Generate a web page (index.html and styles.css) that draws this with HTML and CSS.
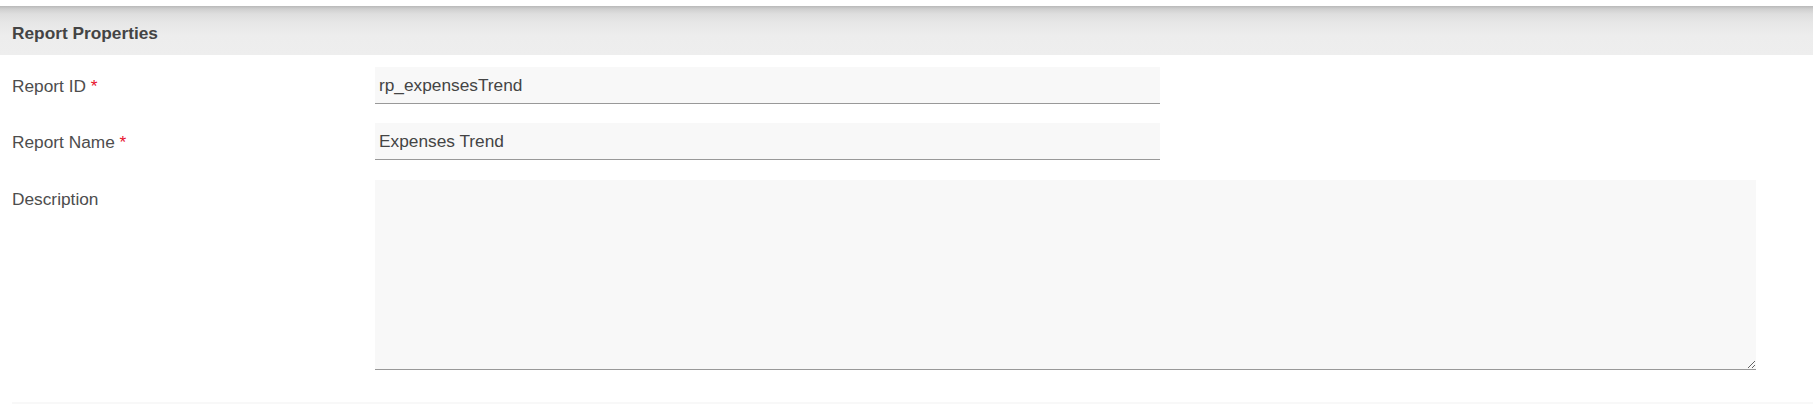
FILE: index.html
```html
<!DOCTYPE html>
<html lang="en">
<head>
<meta charset="utf-8">
<title>Report Properties</title>
<link rel="stylesheet" href="styles.css">
</head>
<body>
<div class="panel">
  <div class="panel-header">Report Properties</div>
  <form class="form">
    <div class="row">
      <label class="label" for="rid">Report ID <span class="req">*</span></label>
      <input class="field field-short" id="rid" type="text" value="rp_expensesTrend">
    </div>
    <div class="row">
      <label class="label" for="rname">Report Name <span class="req">*</span></label>
      <input class="field field-short" id="rname" type="text" value="Expenses Trend">
    </div>
    <div class="row">
      <label class="label" for="rdesc">Description</label>
      <textarea class="field field-area" id="rdesc"></textarea>
    </div>
  </form>
  <div class="next-section"></div>
</div>
</body>
</html>
```

FILE: styles.css
```css
html, body {
  margin: 0;
  padding: 0;
  background: #ffffff;
}

body {
  font-family: "Liberation Sans", Arial, sans-serif;
  font-size: 17.3px;
  color: #4a4a4a;
  overflow: hidden;
}

.panel {
  padding-top: 6px;
}

.panel-header {
  height: 20px;
  line-height: 20px;
  padding: 17px 12px 12px 12px;
  font-weight: bold;
  color: #444444;
  background: linear-gradient(to bottom, #b9b9b9 0px, #cfcfcf 3px, #dedede 8px, #e6e6e6 16px, #ededed 30px, #eeeeee 49px);
}

.form {
  padding: 12px 0 0 12px;
  display: flex;
  flex-direction: column;
  gap: 19px;
}

.row {
  display: flex;
  align-items: flex-start;
}

.row:last-child {
  margin-top: 1px;
}

.label {
  width: 363px;
  flex: none;
  padding-top: 9px;
  line-height: 20px;
  color: #4d4d4d;
}

.req {
  color: #e8112d;
}

.field {
  box-sizing: border-box;
  border: none;
  border-bottom: 1px solid #999999;
  background: #f8f8f8;
  font-family: "Liberation Sans", Arial, sans-serif;
  font-size: 17.3px;
  color: #444444;
  margin: 0;
  outline: none;
}

.field-short {
  width: 785px;
  height: 37px;
  padding: 0 4px;
  line-height: 20px;
}

.field-area {
  width: 1381px;
  height: 190px;
  padding: 8px 4px;
  resize: both;
  display: block;
}

.next-section {
  margin: 32px 0 0 12px;
  height: 2px;
  background: #f8f8f8;
}
```
